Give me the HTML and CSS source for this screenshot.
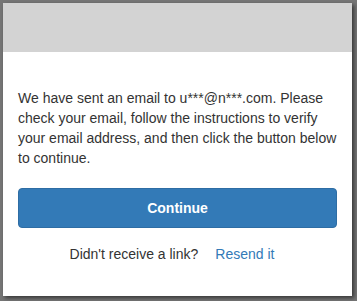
FILE: index.html
```html
<!DOCTYPE html>
<html>
<head>
<meta charset="utf-8">
<link rel="stylesheet" href="styles.css">
</head>
<body>
<div class="card">
  <div class="card-header"></div>
  <div class="card-body">
    <p class="message">We have sent an email to u***@n***.com. Please check your email, follow the instructions to verify your email address, and then click the button below to continue.</p>
    <button class="btn-primary" type="button">Continue</button>
    <div class="resend">
      <span class="resend-label">Didn't receive a link?</span>
      <a class="resend-link" href="#">Resend it</a>
    </div>
  </div>
</div>
</body>
</html>
```

FILE: styles.css
```css
html, body {
  margin: 0;
  padding: 0;
}
body {
  background: #767676;
  font-family: "Liberation Sans", Arial, sans-serif;
  font-size: 14px;
  color: #333333;
  width: 357px;
  height: 301px;
  overflow: hidden;
}
.card {
  margin: 3px 0 0 3px;
  width: 349px;
  height: 293px;
  background: #ffffff;
  box-shadow: 2px 2px 4px rgba(0, 0, 0, 0.55);
  display: flex;
  flex-direction: column;
}
.card-header {
  height: 49px;
  background: #d3d3d3;
  flex: none;
}
.card-body {
  padding: 36px 15px 0 15px;
  display: flex;
  flex-direction: column;
}
.message {
  margin: 0;
  line-height: 20px;
}
.btn-primary {
  margin-top: 20px;
  height: 40px;
  width: 100%;
  background: #337ab7;
  border: 1px solid #2e6da4;
  border-radius: 4px;
  color: #ffffff;
  font-family: "Liberation Sans", Arial, sans-serif;
  font-size: 14px;
  font-weight: bold;
  padding: 0;
}
.resend {
  margin-top: 16px;
  line-height: 20px;
  display: flex;
  justify-content: center;
  gap: 17px;
  padding-right: 11px;
}
.resend-link {
  color: #337ab7;
  text-decoration: none;
}
```
